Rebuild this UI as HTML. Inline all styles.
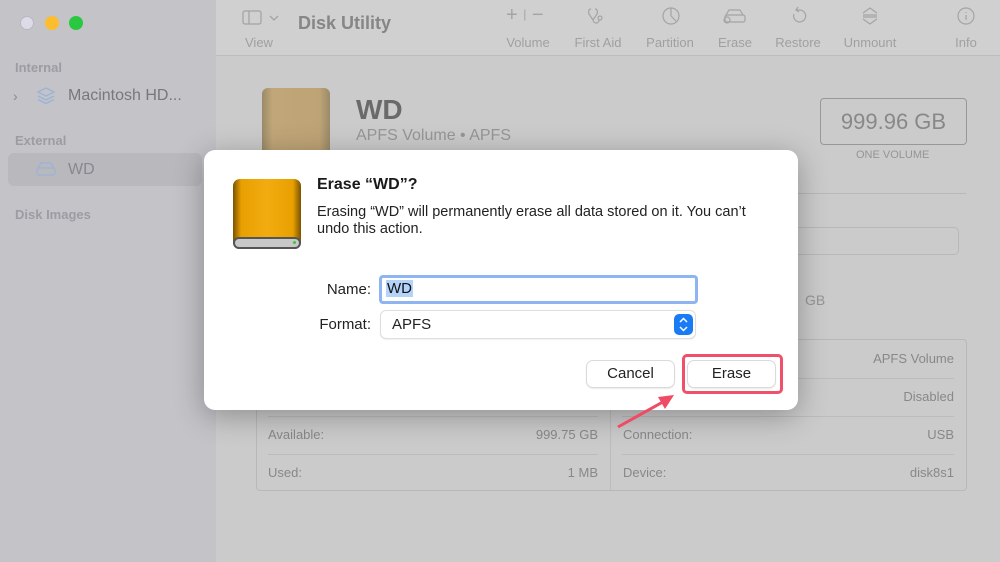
<!DOCTYPE html><html><head><meta charset="utf-8"><style>
*{margin:0;padding:0;box-sizing:border-box}
body{width:1000px;height:562px;overflow:hidden;position:relative;background:#cbcbcb;font-family:"Liberation Sans",sans-serif;color:#8a8a8a}
.a{position:absolute;white-space:nowrap}
.sb{left:0;top:0;width:216px;height:562px;background:#c3c3c8}
.tb{left:216px;top:0;width:784px;height:56px;background:#d0d0d0;border-bottom:1px solid #bdbdbd}
.lbl{font-size:13px;color:#a0a0a0;top:35px;transform:translateX(-50%)}
.row{font-size:13px;color:#888}
.dlg{left:204px;top:150px;width:594px;height:260px;background:#fff;border-radius:11px;box-shadow:0 6px 30px rgba(0,0,0,.3)}
.btn{background:#fff;border-radius:6px;box-shadow:0 0 0 1px #dadada,0 1px 2px rgba(0,0,0,.2);font-size:15px;color:#222;text-align:center;line-height:26px}
</style></head><body>
<div class="a sb"></div>
<div class="a" style="left:20px;top:16px;width:14px;height:14px;border-radius:50%;background:#dcdce6;border:1px solid #b8b8c4"></div>
<div class="a" style="left:45px;top:16px;width:14px;height:14px;border-radius:50%;background:#fcbd2e"></div>
<div class="a" style="left:69px;top:16px;width:14px;height:14px;border-radius:50%;background:#2ac840"></div>
<div class="a" style="left:15px;top:60px;font-size:13px;color:#9c9ca2;font-weight:bold">Internal</div>
<div class="a" style="left:13px;top:88px;font-size:14px;color:#8a8a8a">›</div>
<svg class="a" style="left:36px;top:86px" width="20" height="20" viewBox="0 0 20 20" fill="none" stroke="#9db3d6" stroke-width="1.3"><path d="M10 2l8 4-8 4-8-4z"/><path d="M2 10l8 4 8-4M2 13.5l8 4 8-4"/></svg>
<div class="a" style="left:68px;top:87px;font-size:16px;color:#78787c">Macintosh HD...</div>
<div class="a" style="left:15px;top:133px;font-size:13px;color:#9c9ca2;font-weight:bold">External</div>
<div class="a" style="left:8px;top:153px;width:194px;height:33px;background:#b8b8bd;border-radius:6px"></div>
<svg class="a" style="left:35px;top:161px" width="22" height="16" viewBox="0 0 22 16" fill="none" stroke="#9db3d6" stroke-width="1.3"><path d="M3 7L6 2h10l3 5"/><rect x="2" y="7" width="18" height="7" rx="2"/></svg>
<div class="a" style="left:68px;top:161px;font-size:16px;color:#88888f">WD</div>
<div class="a" style="left:15px;top:207px;font-size:13px;color:#9c9ca2;font-weight:bold">Disk Images</div>
<div class="a tb"></div>
<svg class="a" style="left:242px;top:10px" width="40" height="16" fill="none" stroke="#a4a4a4" stroke-width="1.3"><rect x="1" y="1" width="18" height="13" rx="2"/><path d="M7 1v13M28 6l4 4 4-4"/></svg>
<div class="a" style="left:245px;top:35px;font-size:13px;color:#a0a0a0">View</div>
<div class="a" style="left:298px;top:13px;font-size:18px;font-weight:bold;color:#868686">Disk Utility</div>
<div class="a" style="left:506px;top:4px;font-size:20px;color:#a4a4a4">+ <span style="font-size:12px;vertical-align:3px">|</span> −</div>
<svg class="a" style="left:586px;top:7px" width="24" height="20" fill="none" stroke="#a4a4a4" stroke-width="1.2"><path d="M5 2c-2 0-3 2-2 5l4 6 4-6c1-3 0-5-2-5M7 13c1 4 6 4 6 0"/><circle cx="14" cy="11" r="2"/></svg>
<svg class="a" style="left:661px;top:6px" width="20" height="20" fill="none" stroke="#a4a4a4" stroke-width="1.2"><circle cx="10" cy="10" r="8"/><path d="M10 10V2M10 10l5 5"/></svg>
<svg class="a" style="left:722px;top:8px" width="26" height="16" fill="none" stroke="#a4a4a4" stroke-width="1.2"><path d="M4 7l3-5h11l3 5"/><rect x="3" y="7" width="20" height="7" rx="2"/><circle cx="5" cy="12" r="3"/></svg>
<svg class="a" style="left:789px;top:6px" width="20" height="20" fill="none" stroke="#a4a4a4" stroke-width="1.2"><path d="M5 8a6 6 0 1 0 5-4H7M9 1L7 4l3 2"/></svg>
<svg class="a" style="left:860px;top:6px" width="20" height="20" fill="none" stroke="#a4a4a4" stroke-width="1.2"><path d="M3 7l7-5 7 5M3 13l7 5 7-5M3 9h14M3 11h14"/></svg>
<svg class="a" style="left:957px;top:7px" width="20" height="20" fill="none" stroke="#a4a4a4" stroke-width="1.2"><circle cx="9" cy="9" r="8"/><path d="M9 8v5M9 5v1"/></svg>
<div class="a lbl" style="left:528px">Volume</div>
<div class="a lbl" style="left:598px">First Aid</div>
<div class="a lbl" style="left:670px">Partition</div>
<div class="a lbl" style="left:735px">Erase</div>
<div class="a lbl" style="left:798px">Restore</div>
<div class="a lbl" style="left:870px">Unmount</div>
<div class="a lbl" style="left:966px">Info</div>
<div class="a" style="left:262px;top:88px;width:68px;height:70px;border-radius:6px;background:linear-gradient(90deg,#9a8a6a,#c0a678 15%,#bea375 85%,#9a8a6a)"></div>
<div class="a" style="left:356px;top:94px;font-size:28px;font-weight:bold;color:#6a6a6a">WD</div>
<div class="a" style="left:356px;top:127px;font-size:16px;color:#969696">APFS Volume • APFS</div>
<div class="a" style="left:820px;top:98px;width:147px;height:47px;border:1px solid #989898;border-radius:4px;font-size:22px;color:#888;text-align:center;line-height:45px">999.96 GB</div>
<div class="a" style="left:856px;top:149px;font-size:11px;color:#959595">ONE VOLUME</div>
<div class="a" style="left:600px;top:193px;width:366px;height:1px;background:#b8b8b8"></div>
<div class="a" style="left:780px;top:227px;width:179px;height:28px;border:1px solid #b8b8b8;border-radius:5px"></div>
<div class="a" style="left:805px;top:292px;font-size:14px;color:#959595">GB</div>
<div class="a" style="left:256px;top:339px;width:711px;height:152px;border:1px solid #b8b8b8;border-radius:4px"></div>
<div class="a" style="left:610px;top:340px;width:1px;height:150px;background:#bcbcbc"></div>
<div class="a" style="left:268px;top:416px;width:330px;height:1px;background:#bcbcbc"></div>
<div class="a" style="left:268px;top:454px;width:330px;height:1px;background:#bcbcbc"></div>
<div class="a" style="left:622px;top:378px;width:332px;height:1px;background:#bcbcbc"></div>
<div class="a" style="left:622px;top:416px;width:332px;height:1px;background:#bcbcbc"></div>
<div class="a" style="left:622px;top:454px;width:332px;height:1px;background:#bcbcbc"></div>
<div class="a row" style="right:46px;top:351px">APFS Volume</div>
<div class="a row" style="right:46px;top:389px">Disabled</div>
<div class="a row" style="left:268px;top:427px">Available:</div>
<div class="a row" style="right:402px;top:427px">999.75 GB</div>
<div class="a row" style="left:623px;top:427px">Connection:</div>
<div class="a row" style="right:46px;top:427px">USB</div>
<div class="a row" style="left:268px;top:465px">Used:</div>
<div class="a row" style="right:402px;top:465px">1 MB</div>
<div class="a row" style="left:623px;top:465px">Device:</div>
<div class="a row" style="right:46px;top:465px">disk8s1</div>
<div class="a dlg"></div>
<div class="a" style="left:233px;top:179px;width:68px;height:70px;border-radius:7px;background:linear-gradient(90deg,#7a5200,#e8a000 12%,#f2ac10 50%,#e8a000 88%,#7a5200)"></div>
<div class="a" style="left:233px;top:237px;width:68px;height:12px;border-radius:6px;background:#c8c8c8;border:2px solid #555"></div>
<div class="a" style="left:293px;top:241px;width:3px;height:3px;border-radius:50%;background:#3c3"></div>
<div class="a" style="left:317px;top:176px;font-size:16px;font-weight:bold;color:#1a1a1a">Erase “WD”?</div>
<div class="a" style="left:317px;top:204px;font-size:14.5px;color:#222;line-height:17px">Erasing “WD” will permanently erase all data stored on it. You can’t<br>undo this action.</div>
<div class="a" style="right:629px;top:281px;font-size:15px;color:#222">Name:</div>
<div class="a" style="left:379px;top:275px;width:319px;height:29px;border:3px solid #8eb4f2;border-radius:4px"></div>
<div class="a" style="left:386px;top:280px;font-size:15px;color:#111;background:#b3d3fb;padding:0 1px">WD</div>
<div class="a" style="right:629px;top:316px;font-size:15px;color:#222">Format:</div>
<div class="a" style="left:381px;top:311px;width:314px;height:27px;border-radius:5px;box-shadow:0 0 0 1px #dedede,0 1px 2px rgba(0,0,0,.15)"></div>
<div class="a" style="left:392px;top:316px;font-size:15px;color:#222">APFS</div>
<div class="a" style="left:674px;top:314px;width:19px;height:21px;border-radius:5px;background:#1a7cf5"></div>
<svg class="a" style="left:678px;top:316px" width="11" height="17" fill="none" stroke="#fff" stroke-width="1.5"><path d="M2 6l3.5-3.5L9 6M2 11l3.5 3.5L9 11"/></svg>
<div class="a btn" style="left:587px;top:361px;width:87px;height:26px">Cancel</div>
<div class="a btn" style="left:688px;top:361px;width:87px;height:26px">Erase</div>
<div class="a" style="left:682px;top:354px;width:101px;height:40px;border:3px solid #f0506a;border-radius:5px"></div>
<svg class="a" style="left:612px;top:390px" width="62" height="42"><path d="M6 37L58 8" stroke="#f04a64" stroke-width="3"/><path d="M62 5L46 7l7 12z" fill="#f04a64"/></svg>
</body></html>
